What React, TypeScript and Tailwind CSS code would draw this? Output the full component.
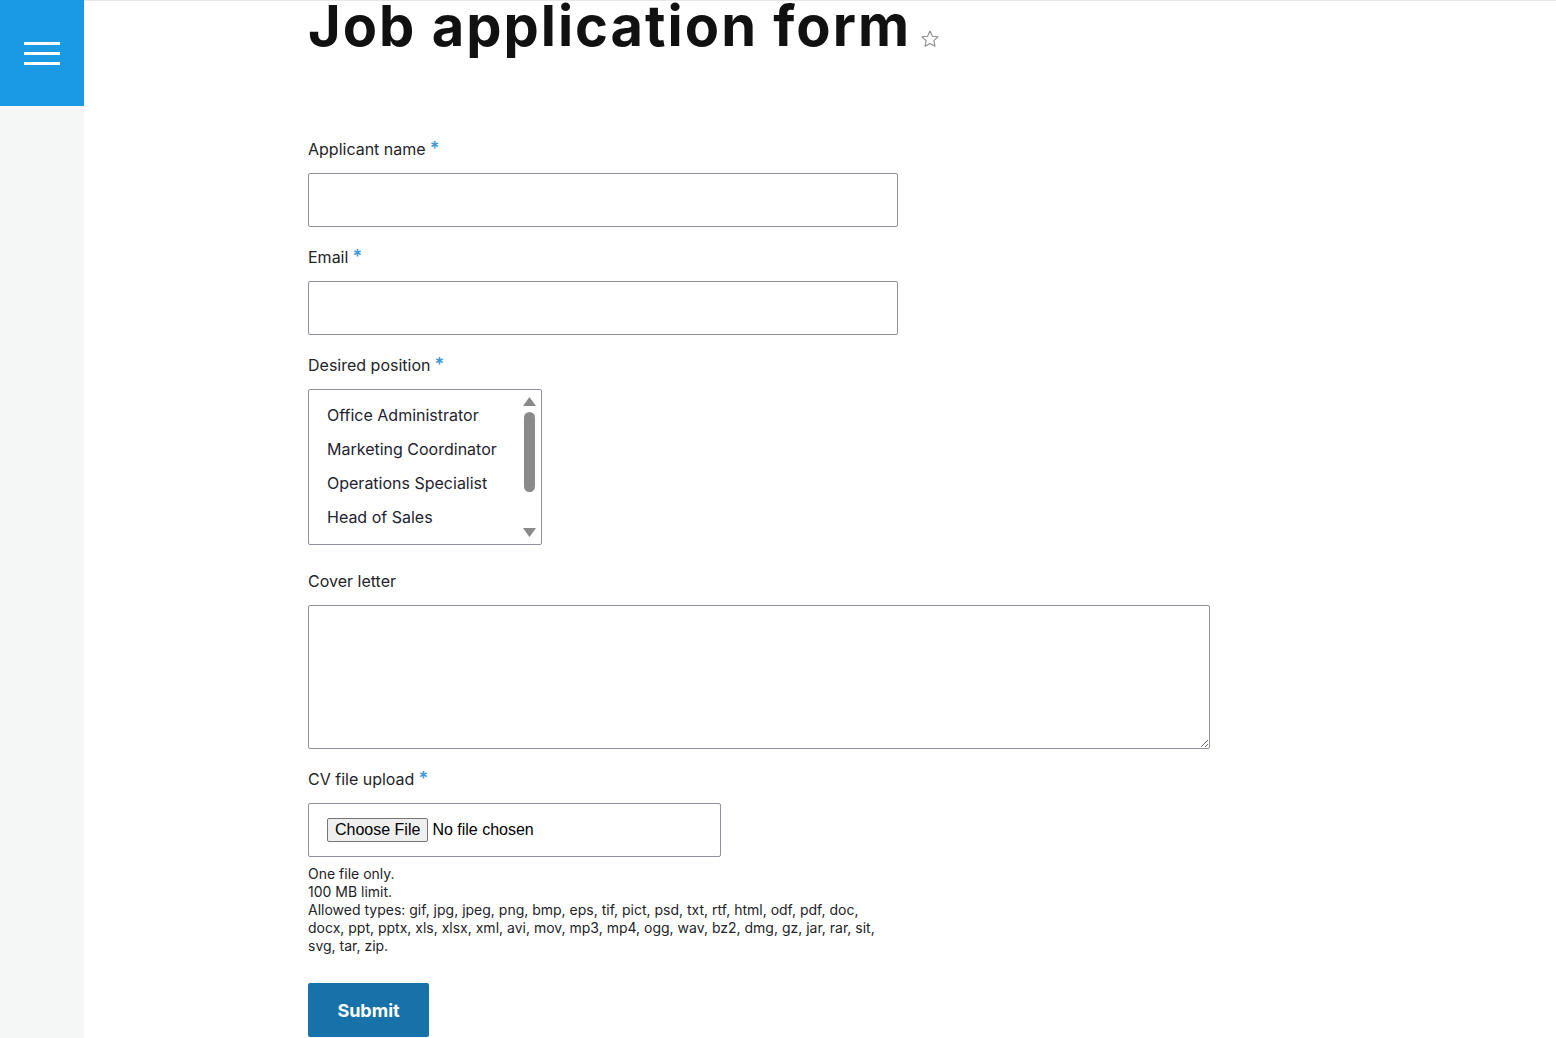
import React from 'react';

const positions = ['Office Administrator', 'Marketing Coordinator', 'Operations Specialist', 'Head of Sales'];

function Label({ text, required }: { text: string; required?: boolean }) {
  return (
    <div className="text-[16px] leading-[20px] text-[#232429] mb-[14px]">
      {text}
      {required && <span className="text-[#3b98d6] ml-[4px] text-[18px] font-semibold">*</span>}
    </div>
  );
}

export default function App() {
  return (
    <div className="flex min-h-[1038px] bg-white font-['Inter',sans-serif]">
      <aside className="w-[84px] shrink-0 bg-[#f5f6f6] flex flex-col">
        <div className="h-[106px] bg-[#1b9ae4] flex flex-col items-center justify-center gap-[7px]">
          <span className="block w-[36px] h-[3px] bg-white" />
          <span className="block w-[36px] h-[3px] bg-white" />
          <span className="block w-[36px] h-[3px] bg-white" />
        </div>
      </aside>

      <main className="flex-1 border-t border-[#e6e7e9] pl-[224px]">
        <div className="flex items-end -mt-[10px]">
          <h1 className="text-[56px] leading-[70px] font-bold tracking-[2px] text-[#111]">Job application form</h1>
          <svg className="ml-[9px] mb-[12px]" width="20" height="20" viewBox="0 0 24 24" fill="none" stroke="#8a8a8a" strokeWidth="1.3" strokeLinejoin="round">
            <path d="M12 2.5l2.9 6.1 6.6.8-4.9 4.6 1.3 6.6L12 17.3l-5.9 3.3 1.3-6.6-4.9-4.6 6.6-.8z" />
          </svg>
        </div>

        <form className="mt-[78px] flex flex-col">
          <Label text="Applicant name" required />
          <div className="w-[590px] h-[54px] border border-[#8e929c] rounded-[2px] mb-[20px]" />

          <Label text="Email" required />
          <div className="w-[590px] h-[54px] border border-[#8e929c] rounded-[2px] mb-[20px]" />

          <Label text="Desired position" required />
          <div className="relative w-[234px] h-[156px] border border-[#8e929c] rounded-[2px] mb-[26px]">
            <ul className="pt-[14px] pl-[18px]">
              {positions.map(p => (
                <li key={p} className="h-[34px] text-[16px] leading-[22px] text-[#222330]">{p}</li>
              ))}
            </ul>
            <div className="absolute right-[4px] top-[6px] bottom-[6px] w-[15px] flex flex-col items-center">
              <svg width="15" height="11" viewBox="0 0 15 11"><path d="M7.5 1 L14 10 L1 10 Z" fill="#8a8a8a" /></svg>
              <div className="mt-[5px] w-[11px] h-[80px] rounded-full bg-[#8a8a8a]" />
              <div className="flex-1" />
              <svg width="15" height="11" viewBox="0 0 15 11"><path d="M1 1 L14 1 L7.5 10 Z" fill="#8a8a8a" /></svg>
            </div>
          </div>

          <Label text="Cover letter" />
          <textarea className="w-[902px] h-[144px] border border-[#8e929c] rounded-[2px] mb-[20px] outline-none" />

          <Label text="CV file upload" required />
          <div className="w-[413px] h-[54px] border border-[#8e929c] rounded-[2px] flex items-center pl-[18px] font-['Liberation_Sans',sans-serif] text-[16px] text-black">
            <span className="h-[24px] px-[7px] border border-[#767676] bg-[#efefef] rounded-[2px] leading-[22px]">Choose File</span>
            <span className="ml-[4px]">No file chosen</span>
          </div>

          <div className="mt-[8px] text-[14px] leading-[18px] text-[#232429] w-[580px]">
            <p>One file only.</p>
            <p>100 MB limit.</p>
            <p>Allowed types: gif, jpg, jpeg, png, bmp, eps, tif, pict, psd, txt, rtf, html, odf, pdf, doc, docx, ppt, pptx, xls, xlsx, xml, avi, mov, mp3, mp4, ogg, wav, bz2, dmg, gz, jar, rar, sit, svg, tar, zip.</p>
          </div>

          <button type="button" className="mt-[28px] w-[121px] h-[54px] bg-[#1672a9] text-white text-[18px] font-bold rounded-[2px]">Submit</button>
        </form>
      </main>
    </div>
  );
}
